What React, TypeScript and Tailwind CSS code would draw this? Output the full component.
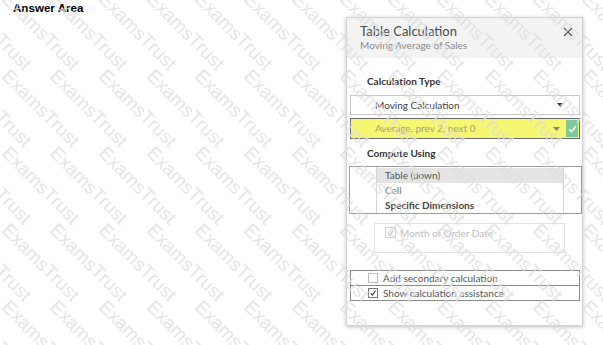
import React from 'react';

const panelFont = { fontFamily: 'Lato, "Open Sans", sans-serif' };

// watermark tiles: computed grid positions
const rows = [-1, 0, 1, 2, 3, 4];
const cols = Array.from({ length: 16 }, (_, i) => i - 2);

function Caret({ color = '#333' }: { color?: string }) {
  return (
    <svg width="7" height="4" viewBox="0 0 7 4" className="shrink-0">
      <path d="M0 0 L7 0 L3.5 4 Z" fill={color} />
    </svg>
  );
}

function Check({ color = '#333' }: { color?: string }) {
  return (
    <svg width="10" height="10" viewBox="0 0 10 10">
      <path d="M2 5.2 L4.2 7.6 L8.2 2.2" fill="none" stroke={color} strokeWidth="1.3" />
    </svg>
  );
}

export default function App() {
  return (
    <div className="relative w-[603px] h-[345px] overflow-hidden bg-white">
      <div
        className="h-[16px] pl-[13px] text-[11.6px] leading-[16px] font-bold text-black"
        style={{ fontFamily: '"Liberation Sans", Arial, sans-serif' }}
      >
        Answer Area
      </div>

      {/* Table Calculation dialog */}
      <div
        className="ml-[346px] mt-[1px] w-[237px] h-[309px] flex flex-col bg-white border border-[#d2d2d2] shadow-[0_1px_4px_rgba(0,0,0,0.25)]"
        style={panelFont}
      >
        <div className="h-[40px] bg-[#f3f3f3] flex justify-between pl-[13px] pr-[8px] pt-[5px]">
          <div className="flex flex-col">
            <span className="text-[13px] leading-[16px] text-[#4a4a4a]">Table Calculation</span>
            <span className="text-[10px] leading-[13px] text-[#8a8a8a]">Moving Average of Sales</span>
          </div>
          <svg width="10" height="10" viewBox="0 0 10 10" className="mt-[4px] mr-[1px]">
            <path d="M1 1 L9 9 M9 1 L1 9" stroke="#555" strokeWidth="1.1" />
          </svg>
        </div>

        <div className="flex flex-col px-[2px]">
          <div className="mt-[17px] pl-[18px] text-[10px] leading-[12px] font-bold text-[#333]">Calculation Type</div>

          <div className="mt-[8px] ml-[1px] w-[230px] h-[20px] flex items-center justify-between border border-[#c8c8c8] pl-[24px] pr-[15px] text-[10px] text-[#444]">
            <span>Moving Calculation</span>
            <Caret />
          </div>

          <div className="mt-[3px] ml-[1px] w-[230px] h-[21px] flex items-stretch border border-[#6a6a6a] bg-[#f6f672]">
            <div className="flex-1 flex items-center justify-between pl-[24px] pr-[6px] text-[10px] text-[#a3a37a]">
              <span>Average, prev 2, next 0</span>
              <Caret color="#8a8a5a" />
            </div>
            <div className="w-[12px] my-[1px] mr-[1px] bg-[#7ec89c] flex items-center justify-center">
              <svg width="9" height="8" viewBox="0 0 9 8">
                <path d="M1 4.2 L3.5 6.6 L8 1.3" fill="none" stroke="#fff" strokeWidth="1.5" />
              </svg>
            </div>
          </div>

          <div className="mt-[8px] pl-[18px] text-[10px] leading-[12px] font-bold text-[#333]">Compute Using</div>

          <div className="mt-[7px] w-[233px] h-[48px] border border-[#9a9a9a] flex">
            <div className="w-[26px]" />
            <div className="w-[188px] border-x border-[#d4d4d4] flex flex-col pt-[1px] text-[10px]">
              <div className="h-[15px] bg-[#e4e4e4] pl-[8px] flex items-center text-[#555]">Table (down)</div>
              <div className="h-[15px] pl-[8px] flex items-center text-[#777]">Cell</div>
              <div className="h-[15px] pl-[8px] flex items-center font-bold text-[#444]">Specific Dimensions</div>
            </div>
          </div>

          <div className="mt-[9px] ml-[25px] w-[191px] h-[30px] border border-[#e2e2e2] flex items-start pt-[3px] pl-[10px] gap-[4px] text-[10px] text-[#bdbdbd]">
            <div className="w-[11px] h-[11px] border border-[#d0d0d0] flex items-center justify-center">
              <Check color="#c4c4c4" />
            </div>
            <span className="leading-[12px]">Month of Order Date</span>
          </div>

          <div className="mt-[17px] ml-[1px] w-[230px] flex flex-col border border-[#8a8a8a] text-[10px] text-[#555]">
            <div className="h-[15px] flex items-center pl-[17px] gap-[5px] border-b border-[#8a8a8a]">
              <div className="w-[10px] h-[10px] border border-[#bcbcbc] bg-white" />
              <span>Add secondary calculation</span>
            </div>
            <div className="h-[14px] flex items-center pl-[17px] gap-[5px]">
              <div className="w-[10px] h-[10px] border border-[#777] bg-white flex items-center justify-center">
                <Check />
              </div>
              <span>Show calculation assistance</span>
            </div>
          </div>
        </div>
      </div>

      {/* ExamsTrust watermark overlay */}
      <div className="absolute inset-0 pointer-events-none">
        {rows.map((r) =>
          cols.map((c) => (
            <span
              key={`${r}-${c}`}
              className="absolute whitespace-nowrap text-[19px] leading-[19px] text-[#dedede]/80 origin-top-left rotate-45"
              style={{ left: c * 48.3 + 12, top: r * 77 + 66, fontFamily: '"Liberation Sans", Arial, sans-serif' }}
            >
              ExamsTrust
            </span>
          ))
        )}
      </div>
    </div>
  );
}
